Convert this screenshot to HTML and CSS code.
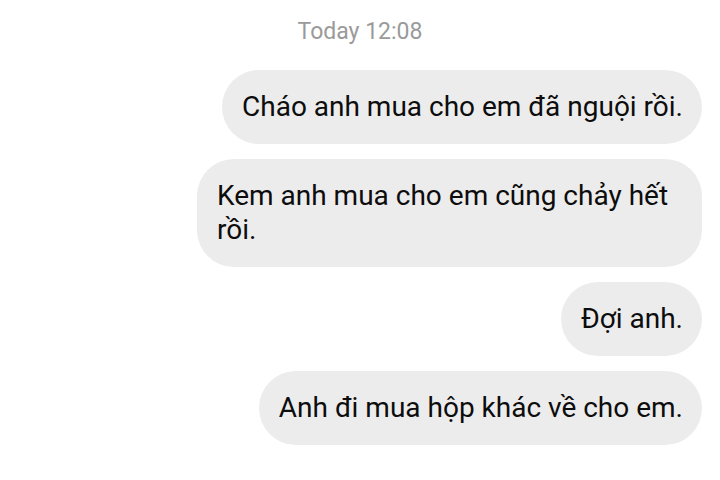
FILE: index.html
```html
<!DOCTYPE html>
<html>

<head>
    <meta charset="UTF-8">
    <meta name="viewport" content="width=device-width, initial-scale=1">
    <title>Chat</title>
    <link rel="stylesheet" href="styles.css">
</head>

<body>
    <div class="chat">
        <div class="time">Today 12:08</div>
        <div class="bubble">Cháo anh mua cho em đã nguội rồi.</div>
        <div class="bubble">Kem anh mua cho em cũng chảy hết rồi.</div>
        <div class="bubble">Đợi anh.</div>
        <div class="bubble">Anh đi mua hộp khác về cho em.</div>
    </div>
</body>

</html>
```

FILE: styles.css
```css
body {
    margin: 0;
    background-color: #fff;
    font-family: Roboto, "Noto Sans", sans-serif;
}

.chat {
    display: flex;
    flex-direction: column;
    align-items: flex-end;
    gap: 15px;
    padding: 19px 18px 0 0;
}

.time {
    align-self: stretch;
    text-align: center;
    padding-left: 18px; /* keep it centred on the page */
    margin-bottom: 10px;
    font-size: 23px;
    line-height: 26px;
    color: #9a9a9a;
}

.bubble {
    max-width: 466px;
    padding: 20px 19px 20px 20px;
    border-radius: 37px;
    background-color: #ececec;
    color: #0d0d0d;
    font-size: 28px;
    line-height: 34px;
}
```
